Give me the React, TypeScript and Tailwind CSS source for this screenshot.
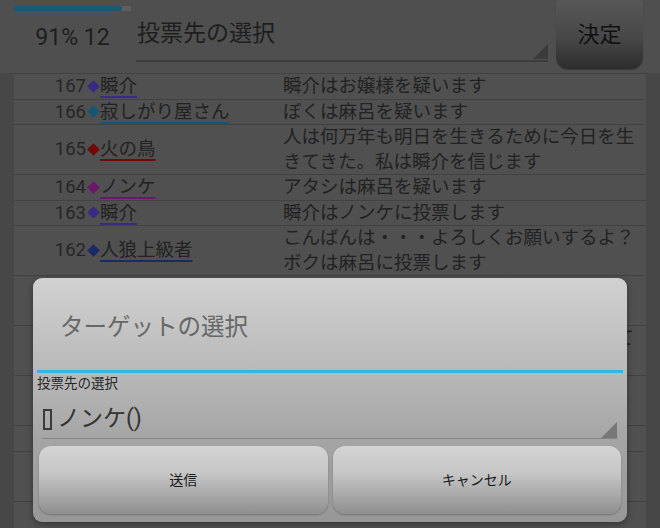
type Row = { no: number; name: string; color: string; msg: string[] };

const rows: Row[] = [
  { no: 167, name: '瞬介', color: '#382b82', msg: ['瞬介はお嬢様を疑います'] },
  { no: 166, name: '寂しがり屋さん', color: '#175570', msg: ['ぼくは麻呂を疑います'] },
  { no: 165, name: '火の鳥', color: '#6e0a0a', msg: ['人は何万年も明日を生きるために今日を生', 'きてきた。私は瞬介を信じます'] },
  { no: 164, name: 'ノンケ', color: '#6a176c', msg: ['アタシは麻呂を疑います'] },
  { no: 163, name: '瞬介', color: '#382b82', msg: ['瞬介はノンケに投票します'] },
  { no: 162, name: '人狼上級者', color: '#1a2a66', msg: ['こんばんは・・・よろしくお願いするよ？', 'ボクは麻呂に投票します'] },
  { no: 161, name: '麻呂', color: '#6b4a1a', msg: ['麻呂は占い師でおじゃる。昨夜の結果を', '言うでおじゃる'] },
  { no: 160, name: 'お嬢様', color: '#7a1a4a', msg: ['わたくしは村人ですわ。皆さまよろしくて', 'よ'] },
  { no: 159, name: '寂しがり屋さん', color: '#175570', msg: ['ひとりにしないで…だれか一緒にいてくれ', 'る？'] },
  { no: 158, name: 'ノンケ', color: '#6a176c', msg: ['アタシは瞬介を信じるわ'] },
  { no: 157, name: '火の鳥', color: '#6e0a0a', msg: ['占い師が二人出たなら片方は偽物である：', '慎重に考えよう'] },
  {
    no: 156,
    name: '瞬介',
    color: '#382b82',
    msg: ['まずは役職の確認からしましょう。占い/', '役職の方は名乗り出てください', 'それから投票先を決めましょう', 'よろしくお願いします'],
  },
];

function Triangle({ size, color }: { size: number; color: string }) {
  return (
    <svg width={size} height={size} viewBox="0 0 10 10" className="block">
      <polygon points="10,0 10,10 0,10" fill={color} />
    </svg>
  );
}

export default function App() {
  return (
    <div className="relative h-[528px] w-[660px] overflow-hidden bg-[#474747] font-['Roboto','Noto_Sans_CJK_JP',sans-serif] text-[#222]">
      <div className="flex h-[73px] bg-[#4f4f4f]">
        <div className="ml-[14px] flex w-[117px] flex-col">
          <div className="mt-[6px] h-[5px] bg-[#5e5e5e]">
            <div className="h-full w-[108px] bg-[#1d5a72]" />
          </div>
          <div className="mt-[13px] text-center text-[23px] leading-[28px] text-[#1e1e1e]">91% 12</div>
        </div>
        <div className="ml-[5px] flex h-[62px] w-[412px] items-end justify-between border-b-[2px] border-[#3c3c3c]">
          <span className="mb-[11px] pl-[1px] text-[23px] leading-[30px] text-[#1e1e1e]">投票先の選択</span>
          <div className="mb-[1px]">
            <Triangle size={15} color="#3a3a3a" />
          </div>
        </div>
        <button className="ml-[8px] flex h-[69px] w-[87px] items-center justify-center rounded-t-[4px] rounded-b-[12px] bg-[linear-gradient(to_bottom,#575757,#474747_55%,#2d2d2d)] text-[22px] text-[#111] shadow-[0_1px_1px_rgba(0,0,0,0.3)]">
          決定
        </button>
      </div>

      <div className="mx-[14px] border-t border-[#424242] bg-[#505050]">
        {rows.map((r) => (
          <div key={r.no} className="flex border-b border-[#424242] text-[18.5px] leading-[24.5px]">
            <div className="flex w-[269px] shrink-0 items-center">
              <span className="w-[72px] text-right text-[#262626]">{r.no}</span>
              <span className="flex w-[14px] justify-center">
                <span className="block h-[9px] w-[9px] rotate-45" style={{ backgroundColor: r.color }} />
              </span>
              <span
                className="whitespace-nowrap text-[#222] underline decoration-2 underline-offset-[4px]"
                style={{ textDecorationColor: r.color }}
              >
                {r.name}
              </span>
            </div>
            <div className="w-[356px] overflow-hidden whitespace-nowrap text-[#222]">
              {r.msg.map((m, i) => (
                <div key={i}>{m}</div>
              ))}
            </div>
          </div>
        ))}
      </div>

      <div className="absolute left-[33px] top-[278px] flex h-[244px] w-[594px] flex-col rounded-[9px] bg-[linear-gradient(to_bottom,#d1d1d1,#b9b9b9_38%,#a5a5a5_66%,#979797)] shadow-[0_2px_6px_rgba(0,0,0,0.35)]">
        <div className="flex h-[92px] items-center pl-[27px] pt-[7px] text-[23.5px] text-[#676767]">ターゲットの選択</div>
        <div className="mx-[4px] h-[3px] bg-[#33b5e5]" />
        <div className="px-[4px] pt-[2px] text-[13.5px] leading-[16px] text-[#262626]">投票先の選択</div>
        <div className="ml-[9px] mr-[10px] mt-[2px] flex h-[46px] items-end justify-between border-b-[1.5px] border-[#868686]">
          <div className="mb-[4px] flex items-center pl-[1px] text-[23px] leading-[30px] text-[#333]">
            <span className="mr-[5px] inline-block h-[21px] w-[9px] border-2 border-[#3a3a3a]" />
            ノンケ()
          </div>
          <Triangle size={16} color="#787878" />
        </div>
        <div className="mt-[7px] flex gap-[5px] px-[6px]">
          <button className="flex h-[68px] flex-1 items-center justify-center rounded-[12px] bg-[linear-gradient(to_bottom,#d4d4d4,#c6c6c6_40%,#8f8f8f)] text-[14px] text-[#1a1a1a] shadow-[0_1px_2px_rgba(0,0,0,0.25)]">
            送信
          </button>
          <button className="flex h-[68px] flex-1 items-center justify-center rounded-[12px] bg-[linear-gradient(to_bottom,#d4d4d4,#c6c6c6_40%,#8f8f8f)] text-[14px] text-[#1a1a1a] shadow-[0_1px_2px_rgba(0,0,0,0.25)]">
            キャンセル
          </button>
        </div>
      </div>
    </div>
  );
}
